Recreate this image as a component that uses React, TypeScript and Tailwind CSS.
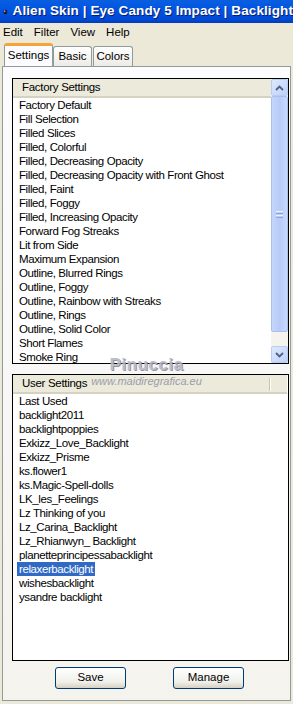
const factory = [
  "Factory Default",
  "Fill Selection",
  "Filled Slices",
  "Filled, Colorful",
  "Filled, Decreasing Opacity",
  "Filled, Decreasing Opacity with Front Ghost",
  "Filled, Faint",
  "Filled, Foggy",
  "Filled, Increasing Opacity",
  "Forward Fog Streaks",
  "Lit from Side",
  "Maximum Expansion",
  "Outline, Blurred Rings",
  "Outline, Foggy",
  "Outline, Rainbow with Streaks",
  "Outline, Rings",
  "Outline, Solid Color",
  "Short Flames",
  "Smoke Ring",
];

const user = [
  "Last Used",
  "backlight2011",
  "backlightpoppies",
  "Exkizz_Love_Backlight",
  "Exkizz_Prisme",
  "ks.flower1",
  "ks.Magic-Spell-dolls",
  "LK_les_Feelings",
  "Lz Thinking of you",
  "Lz_Carina_Backlight",
  "Lz_Rhianwyn_ Backlight",
  "planetteprincipessabacklight",
  "relaxerbacklight",
  "wishesbacklight",
  "ysandre backlight",
];

const font = "font-['Liberation_Sans',Arial,sans-serif]";

function Chevron({ up }: { up?: boolean }) {
  return (
    <svg width="9" height="6" viewBox="0 0 9 6">
      <path
        d={up ? "M1 5 L4.5 1.5 L8 5" : "M1 1 L4.5 4.5 L8 1"}
        fill="none"
        stroke="#4d6185"
        strokeWidth="1.8"
      />
    </svg>
  );
}

function ScrollBar() {
  return (
    <div className="flex h-full w-[17px] flex-col bg-[#f4f3ee]">
      <div className="flex h-[17px] items-center justify-center rounded-[2px] border border-[#b7cbf5] bg-[linear-gradient(135deg,#dfe9fd,#bcd0f8)]">
        <Chevron up />
      </div>
      <div className="flex h-[236px] items-center justify-center rounded-[2px] border border-[#a9c0ef] bg-[linear-gradient(90deg,#c6d6fb,#b7cbf8,#c9d9fc)]">
        <div className="flex flex-col gap-[1px]">
          <div className="h-px w-[7px] bg-[#eef3fe]" />
          <div className="h-px w-[7px] bg-[#8ca6dc]" />
          <div className="h-px w-[7px] bg-[#eef3fe]" />
          <div className="h-px w-[7px] bg-[#8ca6dc]" />
        </div>
      </div>
      <div className="flex-1" />
      <div className="flex h-[17px] items-center justify-center rounded-[2px] border border-[#b7cbf5] bg-[linear-gradient(135deg,#dfe9fd,#bcd0f8)]">
        <Chevron />
      </div>
    </div>
  );
}

function Header({ label, divider }: { label: string; divider?: boolean }) {
  return (
    <div className="relative flex h-[19px] items-center border-b-2 border-[#d6d2c2] bg-[#ebeadb] pl-[9px] text-[11.5px] tracking-[-0.3px] text-black">
      {label}
      {divider && (
        <div className="absolute right-[16px] top-[3px] h-[13px] w-[2px] border-l border-r border-l-[#c7c5b2] border-r-white" />
      )}
    </div>
  );
}

function Row({ label, selected }: { label: string; selected?: boolean }) {
  return (
    <div className="h-[14px] pl-[4px] leading-[14px]">
      <span
        className={
          selected
            ? "inline-block bg-[#316ac5] px-[2px] text-white"
            : "inline-block px-[2px] text-black"
        }
      >
        {label}
      </span>
    </div>
  );
}

function Button({ label }: { label: string }) {
  return (
    <div className="flex h-[22px] w-[71px] items-center justify-center rounded-[3px] border border-[#003c74] bg-[linear-gradient(180deg,#ffffff,#f0f0ea_70%,#d6d0c5)] text-[11.5px] text-black">
      {label}
    </div>
  );
}

export default function App() {
  return (
    <div
      className={`relative h-[704px] w-[293px] overflow-hidden bg-[#ece9d8] ${font}`}
    >
      {/* title bar */}
      <div className="flex h-[23px] items-center gap-[5px] bg-[linear-gradient(180deg,#0a5fdf,#0054e3_40%,#0049d4_85%,#003dbb)] pl-[3px]">
        <svg width="13" height="14" viewBox="0 0 13 14">
          <ellipse cx="6.5" cy="7" rx="5.8" ry="6.2" fill="#1a1a1a" />
          <ellipse cx="4.6" cy="5.2" rx="2.3" ry="2.6" fill="#e8e8e8" />
          <ellipse cx="4.9" cy="5.6" rx="1" ry="1.2" fill="#222" />
        </svg>
        <span className="whitespace-nowrap text-[13.5px] font-bold tracking-[0.1px] text-white [text-shadow:1px_1px_0_#0a1f6e]">
          Alien Skin | Eye Candy 5 Impact | Backlight
        </span>
      </div>

      {/* menu bar */}
      <div className="flex h-[20px] items-center gap-[11px] pl-[3px] text-[11.5px] text-black">
        <span>Edit</span>
        <span>Filter</span>
        <span>View</span>
        <span>Help</span>
      </div>

      {/* tabs */}
      <div className="flex h-[23px] items-end pl-[4px] text-[11.5px] text-black">
        <div className="relative z-10 flex h-[23px] w-[49px] items-start justify-center rounded-t-[3px] border-x border-t-[3px] border-x-[#919b9c] border-t-[#f4a53a] bg-[#fcfcfe] pt-[1px]">
          Settings
        </div>
        <div className="flex h-[20px] w-[39px] items-center justify-center rounded-t-[3px] border border-b-0 border-[#919b9c] bg-[linear-gradient(180deg,#ffffff,#ecebe6)]">
          Basic
        </div>
        <div className="ml-[1px] flex h-[20px] w-[40px] items-center justify-center rounded-t-[3px] border border-b-0 border-[#919b9c] bg-[linear-gradient(180deg,#ffffff,#ecebe6)]">
          Colors
        </div>
      </div>

      {/* tab panel */}
      <div className="mx-[2px] flex h-[635px] flex-col border border-[#919b9c] bg-[linear-gradient(180deg,#fcfcfe,#f4f3ee)] pl-[9px] pt-[11px] text-[11.5px] tracking-[-0.4px]">
        {/* factory settings */}
        <div className="flex h-[286px] w-[277px] flex-col border border-black bg-white">
          <div className="flex min-h-0 flex-1">
            <div className="flex min-w-0 flex-1 flex-col">
              <Header label="Factory Settings" />
              <div className="min-h-0 flex-1 overflow-hidden">
                {factory.map((f) => (
                  <Row key={f} label={f} />
                ))}
              </div>
            </div>
            <ScrollBar />
          </div>
        </div>

        {/* user settings */}
        <div className="mt-[10px] flex h-[287px] w-[277px] flex-col border border-black bg-white">
          <div className="pr-[1px]">
            <Header label="User Settings" divider />
          </div>
          <div className="min-h-0 flex-1 overflow-hidden">
            {user.map((u) => (
              <Row key={u} label={u} selected={u === "relaxerbacklight"} />
            ))}
          </div>
        </div>

        <div className="mt-[6px] flex gap-[47px] pl-[43px] tracking-normal">
          <Button label="Save" />
          <Button label="Manage" />
        </div>
      </div>

      {/* watermark */}
      <div className="pointer-events-none absolute left-[84px] top-[356px] flex w-[125px] flex-col items-center">
        <span className="text-[17px] font-bold leading-[18px] tracking-[0.5px] text-[#b8b8c4] opacity-90 [text-shadow:1px_1px_0_#8a8a99]">
          Pinuccia
        </span>
        <span className="text-[11px] italic leading-[14px] text-[#9c9cab]">
          www.maidiregrafica.eu
        </span>
      </div>
    </div>
  );
}
